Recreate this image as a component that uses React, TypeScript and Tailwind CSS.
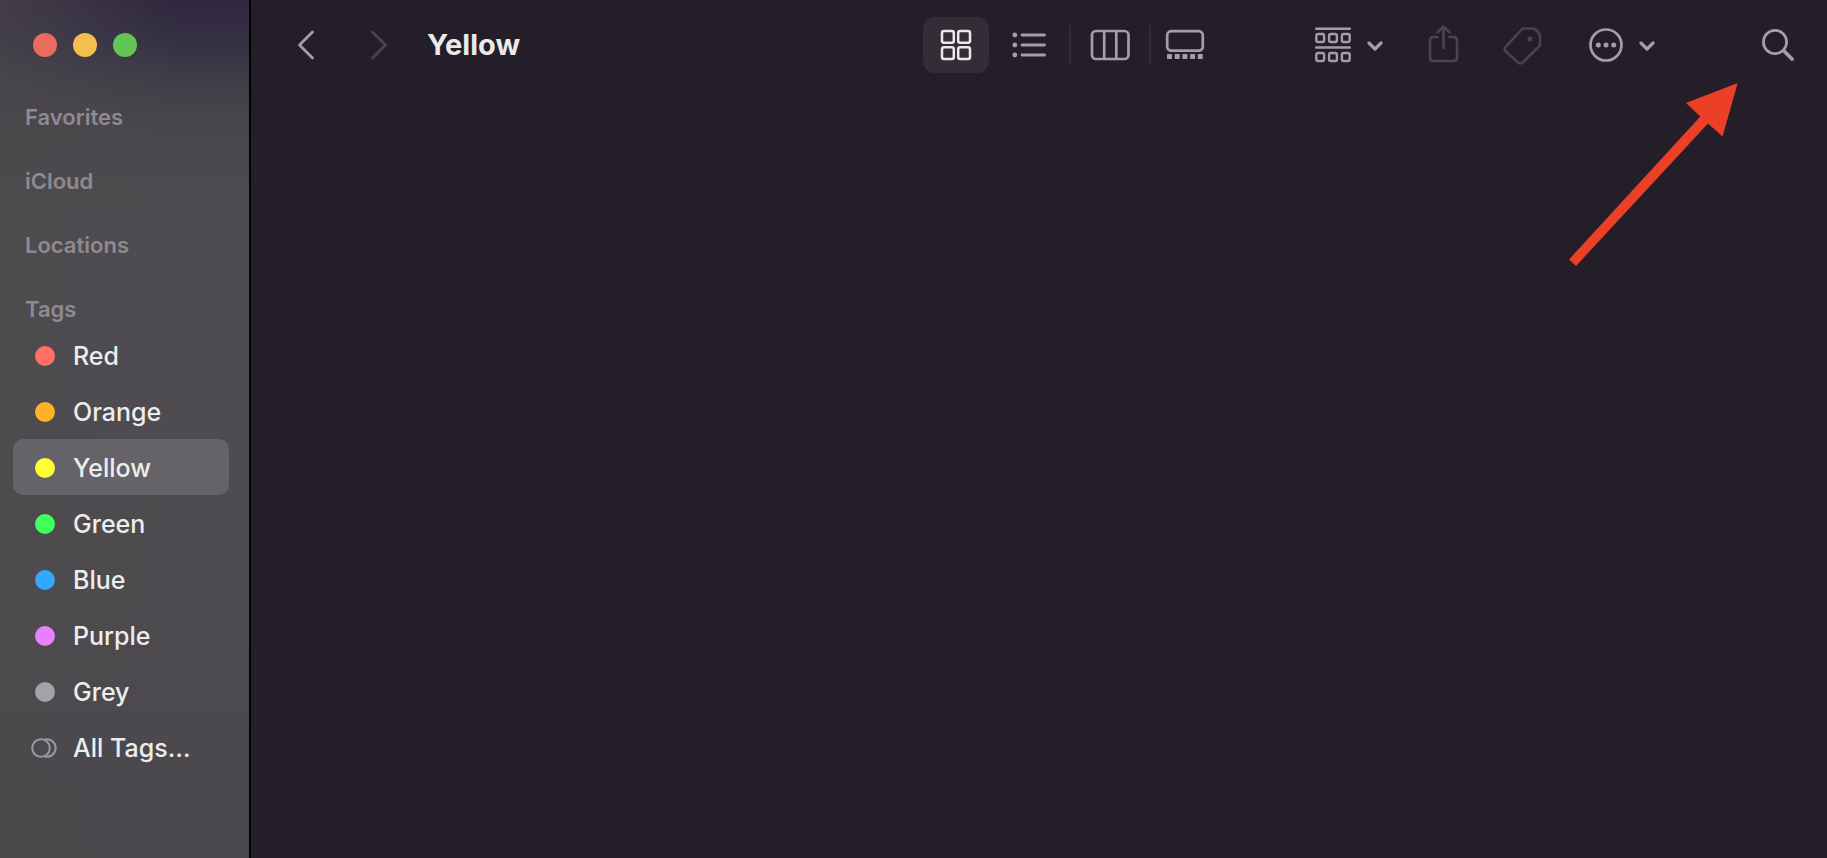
import React from "react";
import clsx from "clsx";

const sections = ["Favorites", "iCloud", "Locations", "Tags"];

const tags = [
  { name: "Red", dot: "bg-[#ff6f66]" },
  { name: "Orange", dot: "bg-[#ffb428]" },
  { name: "Yellow", dot: "bg-[#ffff33]" },
  { name: "Green", dot: "bg-[#41ff5a]" },
  { name: "Blue", dot: "bg-[#33a8ff]" },
  { name: "Purple", dot: "bg-[#e881ff]" },
  { name: "Grey", dot: "bg-[#a4a2a9]" },
];

function AllTagsIcon() {
  return (
    <svg className="h-5 w-7" viewBox="0 0 28 20" fill="none" stroke="#9b999d" strokeWidth="2" aria-hidden="true">
      <circle cx="10" cy="10" r="8.8" />
      <path d="M14 1.400A8.800 8.800 0 1 1 14 18.600" />
    </svg>
  );
}

function ChevronDown() {
  return (
    <svg className="h-4 w-4" viewBox="0 0 16 16" fill="none" stroke="currentColor" strokeWidth="3.200" strokeLinecap="round" strokeLinejoin="round" aria-hidden="true">
      <path d="M2 6L8 12L14 6" />
    </svg>
  );
}

function GridIcon() {
  return (
    <svg className="h-8 w-8" viewBox="0 0 32 32" fill="none" stroke="currentColor" strokeWidth="2.500" aria-hidden="true">
      <rect x="2" y="2" width="11.800" height="11.800" rx="2" />
      <rect x="18.200" y="2" width="11.800" height="11.800" rx="2" />
      <rect x="2" y="18.200" width="11.800" height="11.800" rx="2" />
      <rect x="18.200" y="18.200" width="11.800" height="11.800" rx="2" />
    </svg>
  );
}

function ListIcon() {
  return (
    <svg className="h-7 w-[34px]" viewBox="0 0 34 28" aria-hidden="true">
      <g fill="currentColor">
        <circle cx="2.800" cy="4" r="2.400" />
        <circle cx="2.800" cy="14" r="2.400" />
        <circle cx="2.800" cy="24" r="2.400" />
      </g>
      <path d="M10 4H32.500M10 14H32.500M10 24H32.500" stroke="currentColor" strokeWidth="2.800" strokeLinecap="round" />
    </svg>
  );
}

function ColumnsIcon() {
  return (
    <svg className="h-8 w-10" viewBox="0 0 40 32" fill="none" stroke="currentColor" strokeWidth="2.700" aria-hidden="true">
      <rect x="2" y="2" width="36.500" height="28" rx="4" />
      <path d="M14.200 2V30M26.300 2V30" />
    </svg>
  );
}

function GalleryIcon() {
  return (
    <svg className="h-8 w-10" viewBox="0 0 40 32" aria-hidden="true">
      <rect x="2.200" y="2.200" width="35.600" height="19.400" rx="4" fill="none" stroke="currentColor" strokeWidth="2.700" />
      <g fill="currentColor">
        <rect x="2" y="25" width="5" height="5" rx="0.600" />
        <rect x="9.700" y="25" width="5" height="5" rx="0.600" />
        <rect x="17.400" y="25" width="5" height="5" rx="0.600" />
        <rect x="25.100" y="25" width="5" height="5" rx="0.600" />
        <rect x="32.800" y="25" width="5" height="5" rx="0.600" />
      </g>
    </svg>
  );
}

function GroupIcon() {
  return (
    <svg className="h-9 w-9" viewBox="0 0 36 36" fill="none" stroke="currentColor" strokeWidth="2.400" aria-hidden="true">
      <path d="M1.300 1.800H34.700M1.300 20.500H34.700" strokeWidth="2.600" strokeLinecap="round" />
      <rect x="1.300" y="7" width="7.800" height="8" rx="1.800" />
      <rect x="14.100" y="7" width="7.800" height="8" rx="1.800" />
      <rect x="26.900" y="7" width="7.800" height="8" rx="1.800" />
      <rect x="1.300" y="26" width="7.800" height="8" rx="1.800" />
      <rect x="14.100" y="26" width="7.800" height="8" rx="1.800" />
      <rect x="26.900" y="26" width="7.800" height="8" rx="1.800" />
    </svg>
  );
}

function ShareIcon() {
  return (
    <svg className="h-10 w-8" viewBox="0 0 32 40" fill="none" stroke="currentColor" strokeWidth="2.600" strokeLinecap="round" strokeLinejoin="round" aria-hidden="true">
      <path d="M10.500 12H6.500Q3 12 3 15.500V32.500Q3 36 6.500 36H26.500Q30 36 30 32.500V15.500Q30 12 26.500 12H22.500" />
      <path d="M16.500 23V1.700M10.500 7.200L16.500 1.500L22.500 7.200" />
    </svg>
  );
}

function TagIcon() {
  return (
    <svg className="h-10 w-10" viewBox="0 0 40 40" aria-hidden="true">
      <path
        d="M21 3.500H30Q31.500 3.500 32.500 4.500L36 8Q37 9 37 10.500V19Q37 20.500 36 21.500L19.500 37.700Q17.300 39.200 15.100 37.700L2.500 26Q0.900 24 2.500 22L18.700 4.500Q19.700 3.500 21 3.500Z"
        fill="none"
        stroke="currentColor"
        strokeWidth="2.500"
        strokeLinejoin="round"
      />
      <circle cx="27" cy="14" r="2.500" fill="currentColor" />
    </svg>
  );
}

function MoreIcon() {
  return (
    <svg className="h-[34px] w-[34px]" viewBox="0 0 34 34" aria-hidden="true">
      <circle cx="17" cy="17" r="15.500" fill="none" stroke="currentColor" strokeWidth="2.700" />
      <g fill="currentColor">
        <circle cx="9.300" cy="17" r="2.500" />
        <circle cx="17" cy="17" r="2.500" />
        <circle cx="24.700" cy="17" r="2.500" />
      </g>
    </svg>
  );
}

function SearchIcon() {
  return (
    <svg className="h-8 w-8" viewBox="0 0 32 32" fill="none" stroke="currentColor" strokeLinecap="round" aria-hidden="true">
      <circle cx="13" cy="13" r="11.600" strokeWidth="2.700" />
      <path d="M22 22L30 30" strokeWidth="3.800" />
    </svg>
  );
}

function Sidebar() {
  return (
    <aside className="w-[251px] shrink-0 border-r-2 border-black bg-[#4d4b4f] bg-[linear-gradient(to_right,#4d4a4d99,transparent_70%),linear-gradient(to_bottom,#30283f,#353044_40px,#413d48_80px,#4a474c_130px,#4e4c50_210px,#4e4c50_500px,#4a484c)]">
      <div className="flex h-[90px] items-center gap-4 pl-[33px]">
        <button type="button" aria-label="Close" className="h-6 w-6 rounded-full bg-[#ed6a5f]" />
        <button type="button" aria-label="Minimize" className="h-6 w-6 rounded-full bg-[#f5bf4f]" />
        <button type="button" aria-label="Zoom" className="h-6 w-6 rounded-full bg-[#62c655]" />
      </div>
      <nav className="pt-[11px]">
        <div className="flex flex-col gap-8 pl-[25px]">
          {sections.map((title) => (
            <h2 key={title} className="text-[22px] leading-8 font-semibold text-[#8d8b91]">
              {title}
            </h2>
          ))}
        </div>
        <ul className="mt-0.5 pr-5 pl-[13px]">
          {tags.map((tag) => (
            <li key={tag.name}>
              <button
                type="button"
                className={clsx(
                  "flex h-14 w-full items-center gap-3.5 rounded-[10px] pt-0.5 pl-[18px] text-[25px] leading-8 font-medium text-[#ededee]",
                  tag.name === "Yellow" && "bg-[#656368]"
                )}
              >
                <span className="flex w-7 justify-center">
                  <span className={clsx("h-5 w-5 rounded-full", tag.dot)} />
                </span>
                {tag.name}
              </button>
            </li>
          ))}
          <li>
            <button type="button" className="flex h-14 w-full items-center gap-3.5 rounded-[10px] pt-0.5 pl-[18px] text-[25px] leading-8 font-medium text-[#ededee]">
              <AllTagsIcon />
              All Tags…
            </button>
          </li>
        </ul>
      </nav>
    </aside>
  );
}

function Toolbar() {
  return (
    <header className="flex h-[89px] items-center pr-[25px] pl-[35px] text-[#a49dab]">
      <button type="button" aria-label="Back" className="flex h-10 w-10 items-center justify-center">
        <svg className="h-8 w-5" viewBox="0 0 20 32" fill="none" stroke="currentColor" strokeWidth="2.800" strokeLinecap="round" strokeLinejoin="round" aria-hidden="true">
          <path d="M16.500 3L3.500 16L16.500 29" />
        </svg>
      </button>
      <button type="button" aria-label="Forward" disabled className="ml-[33px] flex h-10 w-10 items-center justify-center text-[#4a444f]">
        <svg className="h-8 w-5" viewBox="0 0 20 32" fill="none" stroke="currentColor" strokeWidth="2.800" strokeLinecap="round" strokeLinejoin="round" aria-hidden="true">
          <path d="M3.500 3L16.500 16L3.500 29" />
        </svg>
      </button>
      <h1 className="ml-7 text-[29px] leading-10 font-bold text-[#ebe9ec]">Yellow</h1>

      <div className="ml-auto flex items-center">
        <button type="button" aria-label="Icon view" className="flex h-14 w-[66px] items-center justify-center rounded-xl bg-[#322d36] text-[#ebe9ec]">
          <GridIcon />
        </button>
        <button type="button" aria-label="List view" className="flex h-14 w-20 items-center justify-center">
          <ListIcon />
        </button>
        <span className="h-10 w-0.5 bg-[#322d36]" />
        <button type="button" aria-label="Column view" className="flex h-14 w-[78px] items-center justify-center">
          <ColumnsIcon />
        </button>
        <span className="h-10 w-0.5 bg-[#322d36]" />
        <button type="button" aria-label="Gallery view" className="flex h-14 w-[68px] items-center justify-center">
          <GalleryIcon />
        </button>
      </div>

      <button type="button" aria-label="Group items" className="ml-[88px] flex h-14 items-center gap-4 px-2">
        <GroupIcon />
        <ChevronDown />
      </button>
      <button type="button" aria-label="Share" disabled className="ml-7 flex h-14 w-12 items-center justify-center text-[#4a444f]">
        <ShareIcon />
      </button>
      <button type="button" aria-label="Edit tags" disabled className="ml-8 flex h-14 w-12 items-center justify-center text-[#4a444f]">
        <TagIcon />
      </button>
      <button type="button" aria-label="More actions" className="ml-[34px] flex h-14 items-center gap-4 px-2">
        <MoreIcon />
        <ChevronDown />
      </button>
      <button type="button" aria-label="Search" className="ml-[91px] flex h-14 w-12 items-center justify-center">
        <SearchIcon />
      </button>
    </header>
  );
}

export default function App() {
  return (
    <div className="flex min-h-screen bg-[#231e28] font-['Inter','Liberation_Sans',sans-serif]">
      <Sidebar />
      <main className="relative min-w-0 flex-1">
        <Toolbar />
        {/* arrow pointing at the search button */}
        <svg className="absolute top-[83px] right-[89px] h-[184px] w-[170px]" viewBox="0 0 170 184" aria-hidden="true">
          <path d="M169.700 0L118 20L132.300 33.500L1 176.500L8 183L140 40.500L154.500 53.500Z" fill="#eb4026" />
        </svg>
      </main>
    </div>
  );
}
